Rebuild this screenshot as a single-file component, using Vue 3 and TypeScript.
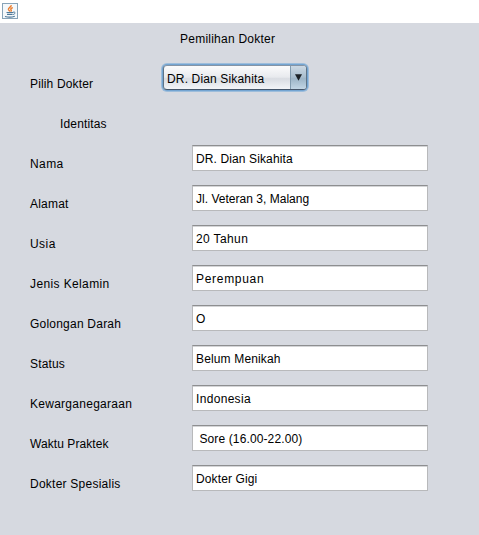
<script setup lang="ts">
import { ref } from 'vue'

interface Field {
  label: string
  value: string
  labelTracking: number
  valueTracking: number
}

const doctors: string[] = ['DR. Dian Sikahita']
const selected = ref<string>(doctors[0])

const fields = ref<Field[]>([
  { label: 'Nama', value: 'DR. Dian Sikahita', labelTracking: 0.4, valueTracking: 0.12 },
  { label: 'Alamat', value: 'Jl. Veteran 3, Malang', labelTracking: 0.2, valueTracking: 0.02 },
  { label: 'Usia', value: '20 Tahun', labelTracking: 0.45, valueTracking: 0.38 },
  { label: 'Jenis Kelamin', value: 'Perempuan', labelTracking: 0.38, valueTracking: 0.7 },
  { label: 'Golongan Darah', value: 'O', labelTracking: 0.22, valueTracking: 0.15 },
  { label: 'Status', value: 'Belum Menikah', labelTracking: 0.15, valueTracking: 0.15 },
  { label: 'Kewarganegaraan', value: 'Indonesia', labelTracking: 0.27, valueTracking: 0.32 },
  { label: 'Waktu Praktek', value: ' Sore (16.00-22.00)', labelTracking: 0.07, valueTracking: 0.12 },
  { label: 'Dokter Spesialis', value: 'Dokter Gigi', labelTracking: 0.24, valueTracking: 0.12 },
])
</script>

<template>
  <div class="window">
    <header class="titlebar">
      <svg class="java" width="16" height="16" viewBox="0 0 16 16">
        <rect x="0.5" y="0.5" width="15" height="15" fill="#f4f8fb" stroke="#87a3b8" />
        <path d="M9.2 2.2C9.6 4 6.1 4.7 6.4 6.4 6.6 7.3 7.6 7.7 7.9 8.5M10.8 4.6C8.9 5.2 8.3 6 9.1 7 9.5 7.5 9.2 8.1 8.8 8.5" fill="none" stroke="#ea7c2c" stroke-width="1.4" />
        <path d="M4.5 9.5H11M5 11.3H10.6M3 13.5Q8 15 12.8 13.3" fill="none" stroke="#4d7899" stroke-width="1.2" />
        <path d="M11 9.2C13.6 8.4 13.8 10.7 11.2 11.6" fill="none" stroke="#4d7899" stroke-width="1" />
      </svg>
    </header>
    <main class="panel">
      <h1 class="title">Pemilihan Dokter</h1>
      <div class="chooser">
        <span class="label">Pilih Dokter</span>
        <button class="combo" type="button">
          <span class="combo-text">{{ selected }}</span>
          <span class="combo-arrow">
            <svg width="7" height="7" viewBox="0 0 7 7"><path d="M0 0.3H7L3.5 6.8Z" fill="#1c2227" /></svg>
          </span>
        </button>
      </div>
      <h2 class="section">Identitas</h2>
      <div class="form">
        <label v-for="field in fields" :key="field.label" class="row">
          <span class="label" :style="{ letterSpacing: field.labelTracking + 'px' }">{{ field.label }}</span>
          <input v-model="field.value" class="field" type="text" :style="{ letterSpacing: field.valueTracking + 'px' }" />
        </label>
      </div>
    </main>
  </div>
</template>

<style>
body {
  margin: 0;
  overflow: hidden;
}
</style>

<style scoped>
.window {
  display: flex;
  flex-direction: column;
  width: 479px;
  height: 535px;
  background: #fff;
  color: #000;
  font: 12px/16px "Liberation Sans", Arial, sans-serif;
  letter-spacing: 0.15px;
}
.titlebar {
  box-sizing: border-box;
  height: 23px;
  padding: 3px 2px;
}
.java {
  display: block;
}
.panel {
  flex: 1;
  background: #d6d9e0;
}
.title,
.section {
  margin: 0;
  font: inherit;
}
.title {
  padding: 8px 0 0 180px;
  letter-spacing: 0.24px;
}
.chooser {
  display: flex;
  align-items: flex-start;
  height: 51px;
  padding: 18px 0 0 30px;
}
.chooser .label {
  width: 133px;
  padding-top: 11px;
}
.combo {
  box-sizing: border-box;
  display: flex;
  width: 144px;
  height: 25px;
  margin: 0;
  padding: 0;
  border: 1px solid #5f7487;
  border-top-color: #8594a5;
  border-bottom-color: #45566a;
  border-radius: 4px;
  overflow: hidden;
  background: linear-gradient(#fbfbfc 0%, #e8eaee 48%, #d9dce2 55%, #f3f5f8 100%);
  box-shadow: 0 0 0 1px #73a4d1, 0 0 0 2px #9dbddb;
  color: #000;
  font: inherit;
  letter-spacing: inherit;
  text-align: left;
}
.combo-text {
  flex: 1;
  padding: 5px 0 0 3px;
}
.combo-arrow {
  display: flex;
  align-items: center;
  justify-content: center;
  width: 15px;
  height: 23px;
  border-left: 1px solid #829caf;
  background: linear-gradient(#ccd9e4 0%, #a9bece 48%, #9db5c7 55%, #c2d6e5 100%);
}
.section {
  padding-left: 60px;
}
.form {
  display: flex;
  flex-direction: column;
  gap: 14px;
  padding: 13px 0 0 30px;
}
.row {
  display: flex;
  height: 26px;
}
.row .label {
  width: 162px;
  padding-top: 11px;
}
.field {
  box-sizing: border-box;
  width: 236px;
  height: 26px;
  margin: 0;
  padding: 2px 3px 0;
  border: 1px solid #b8b9bb;
  border-top-color: #8d8e90;
  border-radius: 0;
  outline: none;
  background: #fff;
  box-shadow: inset 0 1px 0 #d4d5d7;
  color: #000;
  font: inherit;
}
</style>
